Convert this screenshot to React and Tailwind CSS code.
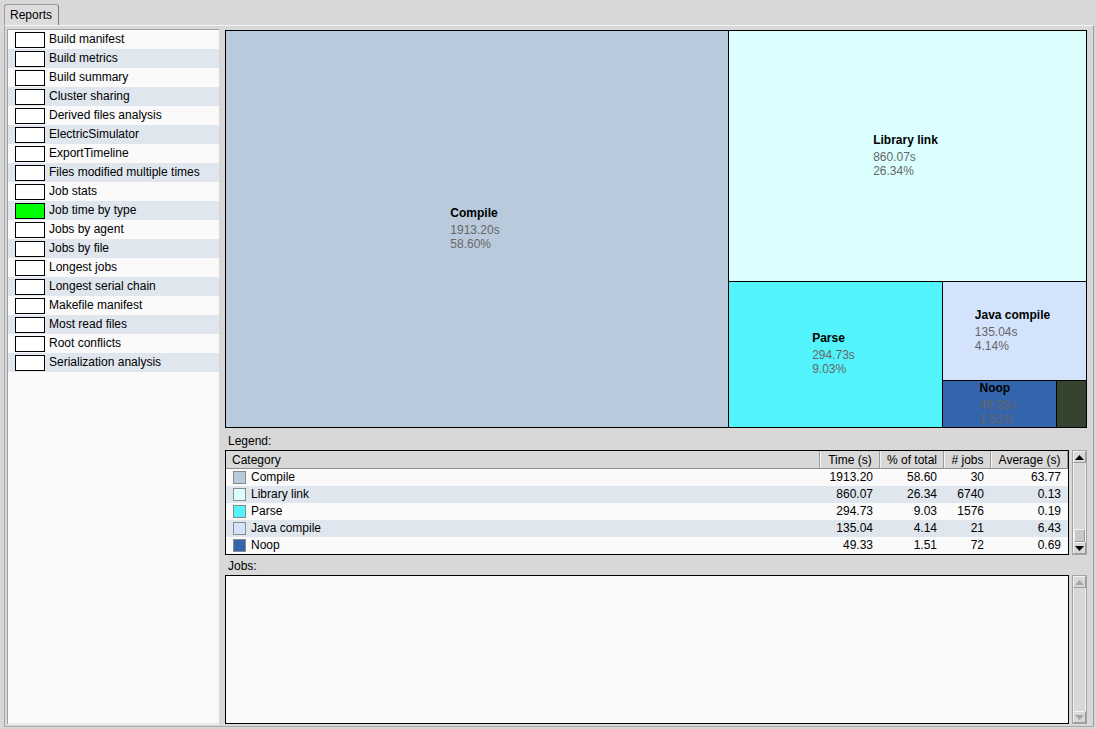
import React from 'react';

const reports = [
  'Build manifest',
  'Build metrics',
  'Build summary',
  'Cluster sharing',
  'Derived files analysis',
  'ElectricSimulator',
  'ExportTimeline',
  'Files modified multiple times',
  'Job stats',
  'Job time by type',
  'Jobs by agent',
  'Jobs by file',
  'Longest jobs',
  'Longest serial chain',
  'Makefile manifest',
  'Most read files',
  'Root conflicts',
  'Serialization analysis',
];

// treemap rectangles, coords relative to the inner box of the map
const tiles = [
  { name: 'Compile', time: '1913.20s', pct: '58.60%', left: 0, top: 0, w: 503, h: 396, bg: '#b8cadb', cls: 'border-r' },
  { name: 'Library link', time: '860.07s', pct: '26.34%', left: 503, top: 0, w: 357, h: 251, bg: '#dbffff', cls: 'border-b' },
  { name: 'Parse', time: '294.73s', pct: '9.03%', left: 503, top: 251, w: 214, h: 145, bg: '#52f3fb', cls: 'border-r' },
  { name: 'Java compile', time: '135.04s', pct: '4.14%', left: 717, top: 251, w: 143, h: 99, bg: '#d3e3fb', cls: 'border-b' },
  { name: 'Noop', time: '49.33s', pct: '1.51%', left: 717, top: 350, w: 114, h: 46, bg: '#3464ab', cls: 'border-r' },
  { name: '', left: 831, top: 350, w: 29, h: 46, bg: '#34442f', cls: '' },
];

const legend = [
  { name: 'Compile', color: '#b8cadb', time: '1913.20', pct: '58.60', jobs: '30', avg: '63.77' },
  { name: 'Library link', color: '#dbffff', time: '860.07', pct: '26.34', jobs: '6740', avg: '0.13' },
  { name: 'Parse', color: '#52f3fb', time: '294.73', pct: '9.03', jobs: '1576', avg: '0.19' },
  { name: 'Java compile', color: '#d3e3fb', time: '135.04', pct: '4.14', jobs: '21', avg: '6.43' },
  { name: 'Noop', color: '#3464ab', time: '49.33', pct: '1.51', jobs: '72', avg: '0.69' },
];

function Arrow({ up, disabled }) {
  return (
    <svg width="9" height="5" viewBox="0 0 9 5">
      <polygon points={up ? '0,5 9,5 4.5,0' : '0,0 9,0 4.5,5'} fill={disabled ? '#a6a6a6' : '#000'} />
    </svg>
  );
}

function ScrollBar({ disabled, thumb }) {
  return (
    <div className="w-[15px] h-full flex flex-col border border-[#a4a4a4] bg-[#d8d8d8]">
      <div className="h-[12px] flex items-center justify-center border border-[#f2f2f2] border-r-[#9a9a9a] border-b-[#9a9a9a]">
        <Arrow up disabled={disabled} />
      </div>
      <div className="flex-1 flex flex-col justify-end border-x border-[#f2f2f2]">
        {thumb && <div className="h-[13px] bg-[#c9c9c9] border border-[#f2f2f2] border-r-[#9a9a9a] border-b-[#9a9a9a]" />}
      </div>
      <div className="h-[12px] flex items-center justify-center border border-[#f2f2f2] border-r-[#9a9a9a] border-b-[#9a9a9a]">
        <Arrow disabled={disabled} />
      </div>
    </div>
  );
}

export default function App() {
  return (
    <div className="w-[1096px] h-[729px] bg-[#d8d8d8] font-['Liberation_Sans',Arial,sans-serif] text-[12px] text-black overflow-hidden">
      {/* Tab strip */}
      <div className="h-[25px] pl-[4px] pt-[4px] flex">
        <div className="w-[55px] h-[21px] rounded-t-[3px] border border-b-0 border-[#9c9c9c] border-r-[#7a7a7a] bg-[#dcdcdc] pl-[5px] leading-[20px]">
          Reports
        </div>
      </div>

      {/* Tab panel */}
      <div className="ml-[4px] w-[1090px] h-[702px] border border-t-[#f4f4f4] border-l-[#a6a6a6] border-r-[#9a9a9a] border-b-[#a6a6a6] flex pt-[3px] pl-[2px]">
        {/* Reports list */}
        <div className="w-[212px] h-[696px] border-l border-t border-[#a0a0a0] border-b-[2px] border-b-[#ececec] bg-[#fafafa]">
          {reports.map((r, i) => (
            <div key={r} className={`h-[19px] flex items-center ${i % 2 ? 'bg-[#dfe6ee]' : 'bg-[#fafafa]'}`}>
              <div className={`ml-[7px] w-[30px] h-[16px] border border-black ${r === 'Job time by type' ? 'bg-[#00ff00]' : 'bg-white'}`} />
              <span className="ml-[4px] leading-[19px]">{r}</span>
            </div>
          ))}
        </div>

        {/* Right side */}
        <div className="ml-[6px] mt-[1px] w-[862px] flex flex-col">
          {/* Treemap */}
          <div className="relative w-[862px] h-[398px] border border-black">
            {tiles.map((t, i) => (
              <div
                key={i}
                className={`absolute border-black overflow-hidden flex items-center justify-center pr-[4px] pb-[2px] ${t.cls}`}
                style={{ left: t.left, top: t.top, width: t.w, height: t.h, background: t.bg }}
              >
                {t.name && (
                  <div className="leading-[14px] shrink-0">
                    <div className="font-bold mb-[3px]">{t.name}</div>
                    <div className="text-[#666666]">{t.time}</div>
                    <div className="text-[#666666]">{t.pct}</div>
                  </div>
                )}
              </div>
            ))}
          </div>

          <div className="h-[22px] pt-[6px] pl-[3px] leading-[14px]">Legend:</div>

          {/* Legend table */}
          <div className="flex h-[105px] gap-[3px]">
            <div className="w-[844px] border border-black bg-[#fafafa]">
              <div className="h-[18px] flex bg-[#d8d8d8] border-b border-[#8c8c8c] leading-[18px]">
                <div className="w-[594px] pl-[6px] border-r border-[#9a9a9a]">Category</div>
                <div className="w-[60px] text-center border-l border-[#f4f4f4] border-r border-r-[#9a9a9a]">Time (s)</div>
                <div className="w-[64px] text-center border-l border-[#f4f4f4] border-r border-r-[#9a9a9a]">% of total</div>
                <div className="w-[47px] text-center border-l border-[#f4f4f4] border-r border-r-[#9a9a9a]">
                  # jobs
                </div>
                <div className="w-[77px] text-center border-l border-[#f4f4f4] border-r border-r-[#9a9a9a]">Average (s)</div>
              </div>
              {legend.map((row, i) => (
                <div key={row.name} className={`h-[17px] flex items-center leading-[17px] ${i % 2 ? 'bg-[#dfe6ee]' : 'bg-[#fafafa]'}`}>
                  <div className="w-[594px] pl-[7px] flex items-center">
                    <div className="w-[13px] h-[13px] border border-[#8a8a8a]" style={{ background: row.color }} />
                    <span className="ml-[5px]">{row.name}</span>
                  </div>
                  <div className="w-[60px] text-right pr-[7px]">{row.time}</div>
                  <div className="w-[64px] text-right pr-[7px]">{row.pct}</div>
                  <div className="w-[47px] text-right pr-[7px]">{row.jobs}</div>
                  <div className="w-[77px] text-right pr-[7px]">{row.avg}</div>
                </div>
              ))}
            </div>
            <ScrollBar thumb />
          </div>

          <div className="h-[20px] pt-[4px] pl-[3px] leading-[14px]">Jobs:</div>

          {/* Jobs */}
          <div className="flex h-[149px] gap-[3px]">
            <div className="w-[844px] border border-black bg-[#fafafa]" />
            <ScrollBar disabled />
          </div>
        </div>
      </div>
    </div>
  );
}
